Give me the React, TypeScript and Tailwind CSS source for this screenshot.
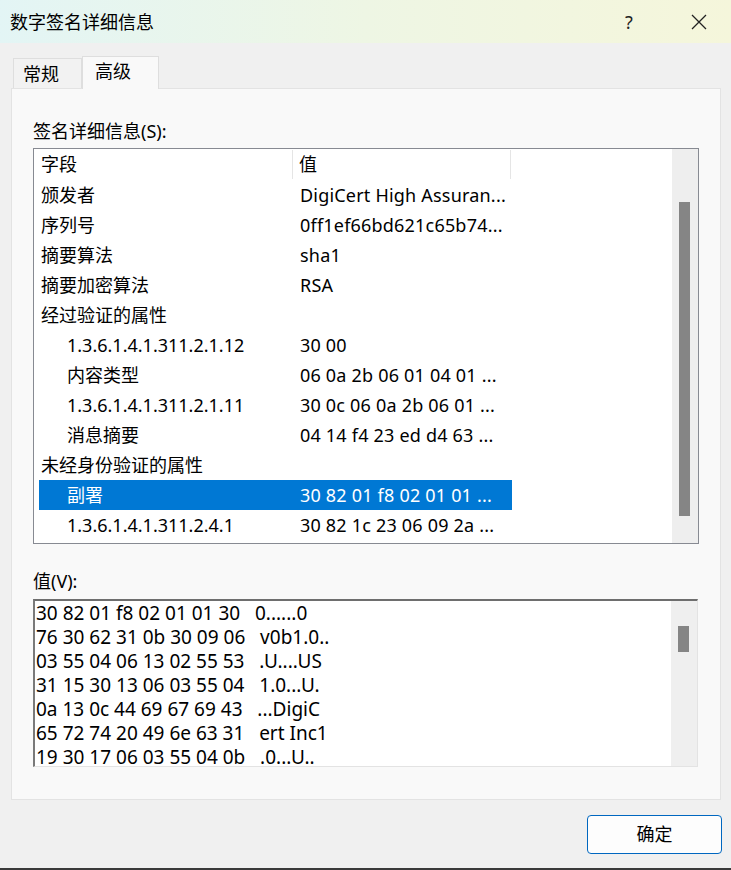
import React from "react";

const FONT = { fontFamily: '"Noto Sans", "Noto Sans CJK SC", sans-serif' };

type Row = { f: string; v: string; indent?: boolean; sel?: boolean };

const rows: Row[] = [
  { f: "颁发者", v: "DigiCert High Assuran..." },
  { f: "序列号", v: "0ff1ef66bd621c65b74..." },
  { f: "摘要算法", v: "sha1" },
  { f: "摘要加密算法", v: "RSA" },
  { f: "经过验证的属性", v: "" },
  { f: "1.3.6.1.4.1.311.2.1.12", v: "30 00", indent: true },
  { f: "内容类型", v: "06 0a 2b 06 01 04 01 ...", indent: true },
  { f: "1.3.6.1.4.1.311.2.1.11", v: "30 0c 06 0a 2b 06 01 ...", indent: true },
  { f: "消息摘要", v: "04 14 f4 23 ed d4 63 ...", indent: true },
  { f: "未经身份验证的属性", v: "" },
  { f: "副署", v: "30 82 01 f8 02 01 01 ...", indent: true, sel: true },
  { f: "1.3.6.1.4.1.311.2.4.1", v: "30 82 1c 23 06 09 2a ...", indent: true },
];

const hex = [
  "30 82 01 f8 02 01 01 30   0......0",
  "76 30 62 31 0b 30 09 06   v0b1.0..",
  "03 55 04 06 13 02 55 53   .U....US",
  "31 15 30 13 06 03 55 04   1.0...U.",
  "0a 13 0c 44 69 67 69 43   ...DigiC",
  "65 72 74 20 49 6e 63 31   ert Inc1",
  "19 30 17 06 03 55 04 0b   .0...U..",
];

export default function App() {
  return (
    <div
      className="w-[731px] h-[870px] bg-[#f0f0f0] flex flex-col text-black overflow-hidden text-[18px]"
      style={FONT}
    >
      {/* Title bar */}
      <div className="h-[43px] shrink-0 flex items-center bg-gradient-to-r from-[#e3f5f5] via-[#eef6e4] to-[#f5f6db]">
        <div className="pl-[10px] flex-1 leading-none">数字签名详细信息</div>
        <div className="w-[60px] mr-[8px] text-center text-[18px] leading-none text-[#222]">?</div>
        <div className="w-[64px] flex justify-center">
          <svg width="16" height="16" viewBox="0 0 16 16">
            <path d="M1 1 L15 15 M15 1 L1 15" stroke="#222" strokeWidth="1.3" />
          </svg>
        </div>
      </div>

      {/* Tabs */}
      <div className="pl-[13px] pt-[13px] flex items-end shrink-0">
        <div className="w-[69px] h-[30px] bg-[#f2f2f2] border border-b-0 border-[#dedede] flex items-center pl-[9px] leading-none">
          常规
        </div>
        <div className="w-[77px] h-[33px] bg-[#f9f9f9] border border-b-0 border-[#dedede] flex items-center pl-[12px] pb-[4px] leading-none relative z-10 -mb-px">
          高级
        </div>
      </div>

      {/* Panel */}
      <div className="ml-[11px] w-[710px] h-[712px] shrink-0 bg-[#f9f9f9] border border-[#e3e3e3] pl-[21px] pt-[30px] flex flex-col">
        <div className="h-[24px] leading-[24px]">签名详细信息(S):</div>
        <div className="mt-[5px] w-[666px] h-[396px] border border-[#878a92] bg-white flex">
          <div className="flex-1 flex flex-col">
            {/* header */}
            <div className="h-[31px] flex items-stretch">
              <div className="w-[259px] pl-[7px] flex items-center border-r border-[#e5e5e5] my-[1px]">字段</div>
              <div className="w-[218px] pl-[6px] flex items-center border-r border-[#e5e5e5] my-[1px]">值</div>
            </div>
            {rows.map((r, i) => (
              <div key={i} className="h-[30px] flex pl-[5px] whitespace-nowrap">
                <div className={`flex w-[473px] h-[30px] items-center pt-[1px] ${r.sel ? "bg-[#0078d4] text-white" : ""}`}>
                  <div className={`w-[254px] ${r.indent ? "pl-[28px]" : "pl-[2px]"}`}>{r.f}</div>
                  <div className="w-[219px] pl-[7px] overflow-hidden tracking-[0.2px]">{r.v}</div>
                </div>
              </div>
            ))}
          </div>
          <div className="w-[26px] bg-[#eeeeee] pt-[53px] pl-[7px]">
            <div className="w-[11px] h-[314px] bg-[#858585]" />
          </div>
        </div>
        <div className="mt-[25px] h-[24px] leading-[24px]">值(V):</div>
        <div className="mt-[6px] w-[665px] h-[168px] bg-white border-t-2 border-l-2 border-t-[#6e6e6e] border-l-[#7a7a7a] border-r border-b border-r-[#e3e3e3] border-b-[#e3e3e3] flex overflow-hidden">
          <div className="flex-1 pl-[1px] overflow-hidden text-[19px]">
            {hex.map((h, i) => (
              <div key={i} className="h-[24px] leading-[24px] whitespace-pre">
                {h}
              </div>
            ))}
          </div>
          <div className="w-[26px] bg-[#efefef] pt-[25px] pl-[7px]">
            <div className="w-[11px] h-[26px] bg-[#858585]" />
          </div>
        </div>
      </div>

      {/* Buttons */}
      <div className="mt-[15px] flex justify-end pr-[9px] shrink-0">
        <div className="w-[135px] h-[39px] bg-[#fdfdfd] border border-[#0067c0] rounded-[4px] flex items-center justify-center">
          确定
        </div>
      </div>
      <div className="flex-1" />
      <div className="h-[2px] bg-[#3a3a3a] shrink-0" />
    </div>
  );
}
